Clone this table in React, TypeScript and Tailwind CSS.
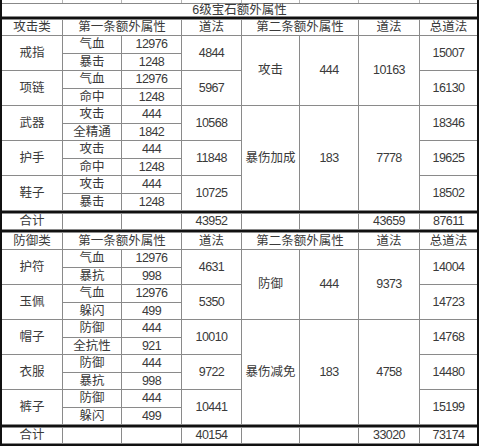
import type { ReactNode } from "react";

type Item = {
  name: string;
  a1: string;
  v1: string;
  a2: string;
  v2: string;
  daofa: string;
  total: string;
};

type Second = { attr: string; val: string; daofa: string; span: "row-span-4" | "row-span-6" };

type Section = {
  title: string;
  items: Item[];
  seconds: Record<number, Second>;
  sum: { first: string; second: string; total: string };
};

const SECTIONS: Section[] = [
  {
    title: "攻击类",
    items: [
      { name: "戒指", a1: "气血", v1: "12976", a2: "暴击", v2: "1248", daofa: "4844", total: "15007" },
      { name: "项链", a1: "气血", v1: "12976", a2: "命中", v2: "1248", daofa: "5967", total: "16130" },
      { name: "武器", a1: "攻击", v1: "444", a2: "全精通", v2: "1842", daofa: "10568", total: "18346" },
      { name: "护手", a1: "攻击", v1: "444", a2: "命中", v2: "1248", daofa: "11848", total: "19625" },
      { name: "鞋子", a1: "攻击", v1: "444", a2: "暴击", v2: "1248", daofa: "10725", total: "18502" },
    ],
    seconds: {
      0: { attr: "攻击", val: "444", daofa: "10163", span: "row-span-4" },
      2: { attr: "暴伤加成", val: "183", daofa: "7778", span: "row-span-6" },
    },
    sum: { first: "43952", second: "43659", total: "87611" },
  },
  {
    title: "防御类",
    items: [
      { name: "护符", a1: "气血", v1: "12976", a2: "暴抗", v2: "998", daofa: "4631", total: "14004" },
      { name: "玉佩", a1: "气血", v1: "12976", a2: "躲闪", v2: "499", daofa: "5350", total: "14723" },
      { name: "帽子", a1: "防御", v1: "444", a2: "全抗性", v2: "921", daofa: "10010", total: "14768" },
      { name: "衣服", a1: "防御", v1: "444", a2: "暴抗", v2: "998", daofa: "9722", total: "14480" },
      { name: "裤子", a1: "防御", v1: "444", a2: "躲闪", v2: "499", daofa: "10441", total: "15199" },
    ],
    seconds: {
      0: { attr: "防御", val: "444", daofa: "9373", span: "row-span-4" },
      2: { attr: "暴伤减免", val: "183", daofa: "4758", span: "row-span-6" },
    },
    sum: { first: "40154", second: "33020", total: "73174" },
  },
];

function Cell({ children, className = "" }: { children?: ReactNode; className?: string }) {
  return (
    <div className={`flex items-center justify-center bg-white leading-none ${className}`}>
      {children}
    </div>
  );
}

// digits in the screenshot are narrow, so squeeze them a little
function Num({ children }: { children: ReactNode }) {
  return <span className="text-[12.5px] tracking-[-0.6px]">{children}</span>;
}

const Thick = () => <div className="col-span-8 bg-[#111]" />;

function SectionRows({ s }: { s: Section }) {
  return (
    <>
      <Cell>{s.title}</Cell>
      <Cell className="col-span-2">第一条额外属性</Cell>
      <Cell>道法</Cell>
      <Cell className="col-span-2">第二条额外属性</Cell>
      <Cell>道法</Cell>
      <Cell>总道法</Cell>
      {s.items.map((it, i) => {
        const sec = s.seconds[i];
        return [
          <Cell key={`${it.name}-n`} className="row-span-2">{it.name}</Cell>,
          <Cell key={`${it.name}-a1`}>{it.a1}</Cell>,
          <Cell key={`${it.name}-v1`}><Num>{it.v1}</Num></Cell>,
          <Cell key={`${it.name}-d`} className="row-span-2"><Num>{it.daofa}</Num></Cell>,
          ...(sec
            ? [
                <Cell key={`${it.name}-sa`} className={sec.span}>{sec.attr}</Cell>,
                <Cell key={`${it.name}-sv`} className={sec.span}><Num>{sec.val}</Num></Cell>,
                <Cell key={`${it.name}-sd`} className={sec.span}><Num>{sec.daofa}</Num></Cell>,
              ]
            : []),
          <Cell key={`${it.name}-t`} className="row-span-2"><Num>{it.total}</Num></Cell>,
          <Cell key={`${it.name}-a2`}>{it.a2}</Cell>,
          <Cell key={`${it.name}-v2`}><Num>{it.v2}</Num></Cell>,
        ];
      })}
      <Thick />
      <Cell>合计</Cell>
      <Cell />
      <Cell />
      <Cell><Num>{s.sum.first}</Num></Cell>
      <Cell />
      <Cell />
      <Cell><Num>{s.sum.second}</Num></Cell>
      <Cell><Num>{s.sum.total}</Num></Cell>
      <Thick />
    </>
  );
}

export default function App() {
  return (
    <div className="w-[480px] h-[446px] overflow-hidden bg-white">
      <div className="w-[479px] border-x-2 border-[#111] font-['Liberation_Sans','Noto_Sans_CJK_SC',sans-serif] text-[12.5px] text-[#3a3a3a]">
        <div className="grid h-[3px] grid-cols-[60px_58px_59px_59px_57px_58px_60px_57px] gap-x-px bg-[#b5b5b5]">
          {Array.from({ length: 8 }, (_, i) => (
            <div key={i} className="bg-white" />
          ))}
        </div>
        <div className="grid grid-cols-[60px_58px_59px_59px_57px_58px_60px_57px] grid-rows-[12px_2px_15px_repeat(10,16.5px)_2px_15px_2px_16px_repeat(10,16.5px)_2px_15px_2px] gap-px border-t border-[#888] bg-[#8a8a8a]">
          <Cell className="col-span-8">6级宝石额外属性</Cell>
          <Thick />
          <SectionRows s={SECTIONS[0]} />
          <SectionRows s={SECTIONS[1]} />
        </div>
      </div>
    </div>
  );
}
